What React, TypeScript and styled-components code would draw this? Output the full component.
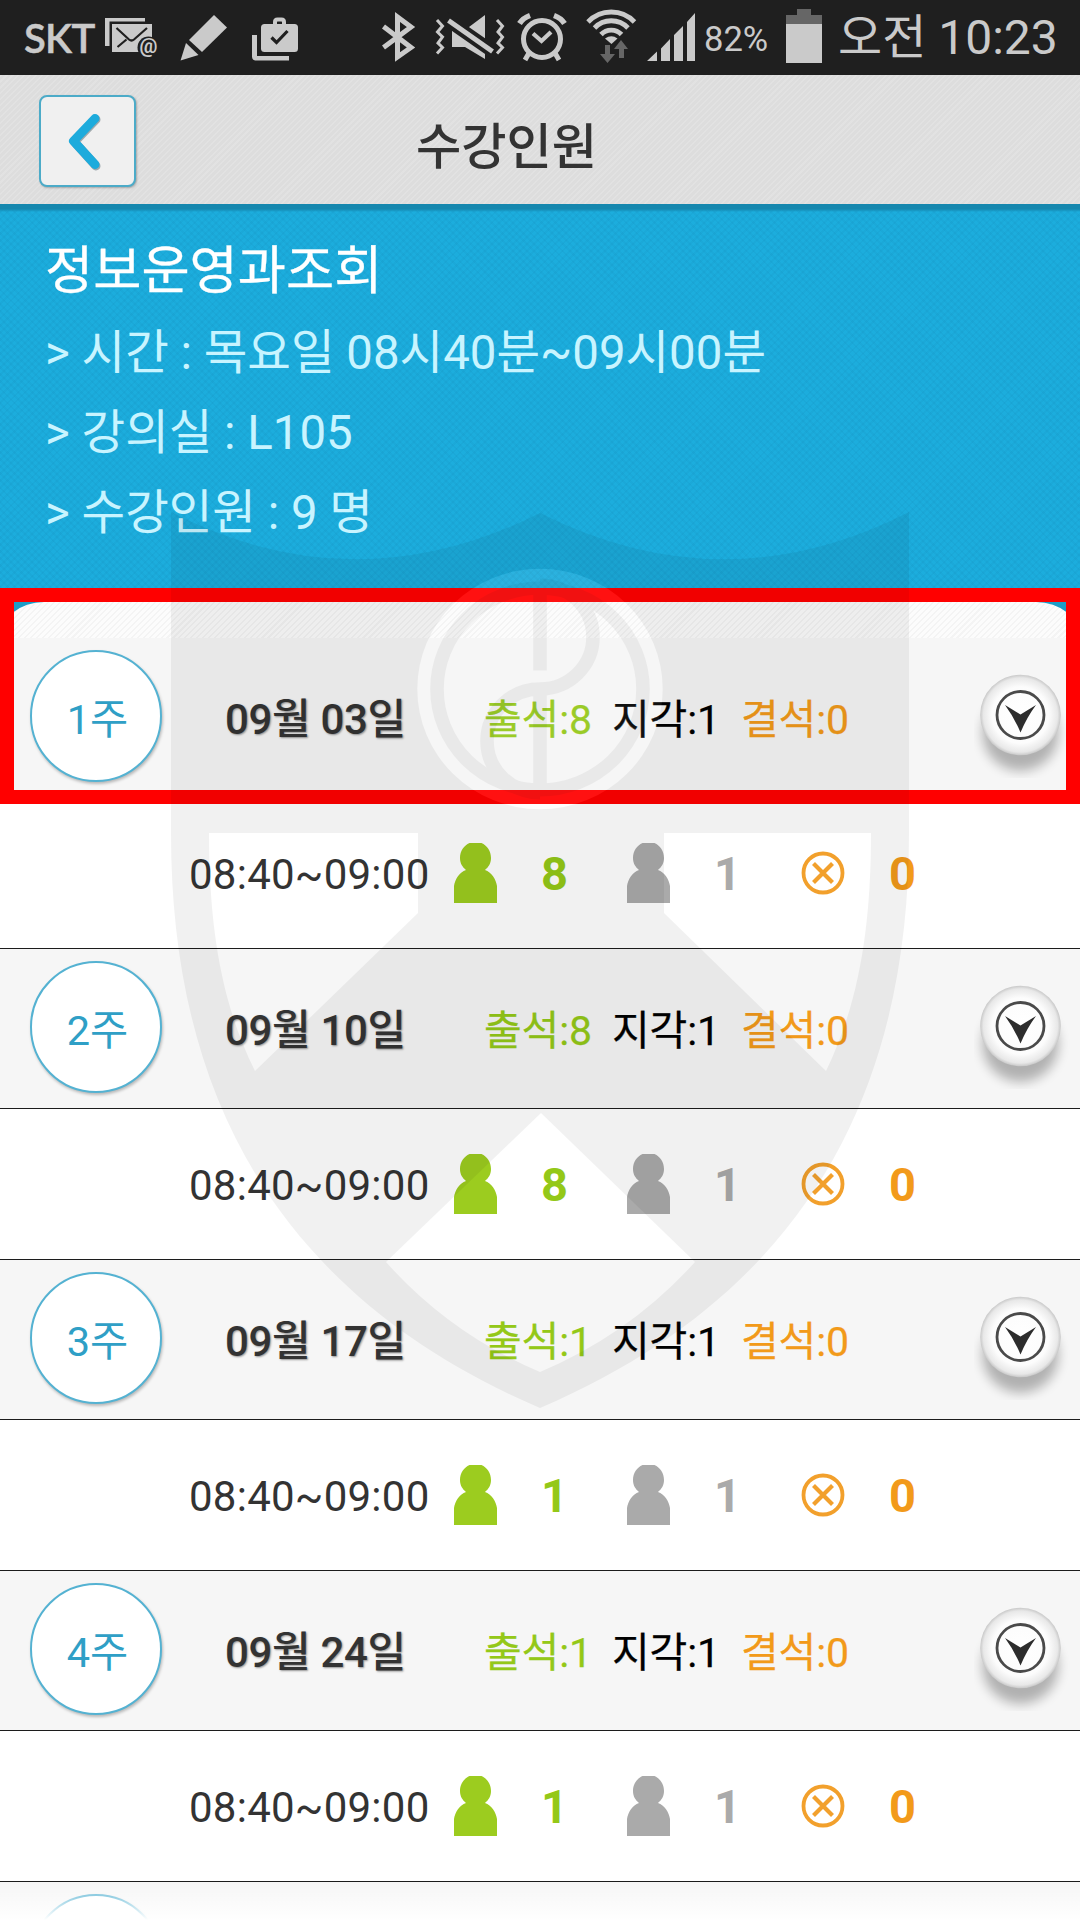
import React from "react";
import styled, { createGlobalStyle, css } from "styled-components";

const GlobalStyle = createGlobalStyle`
  * { box-sizing: border-box; }
  html, body { margin: 0; padding: 0; background: #fff; }
  body { overflow: hidden; }
`;

const font = css`
  font-family: Roboto, "Noto Sans CJK KR", sans-serif;
`;

const Screen = styled.div`
  ${font}
  position: relative;
  width: 1080px;
  height: 1920px;
  overflow: hidden;
  background: #fff;
  color: #333;
  white-space: pre;
`;

/* ---------- status bar ---------- */

const StatusBar = styled.div`
  height: 75px;
  background: #1f1f1f;
  color: #cacaca;
  display: flex;
  justify-content: space-between;
`;

const StatusGroup = styled.div`
  display: flex;
  height: 75px;
`;

const Glyph = styled.svg<{ $gap: number }>`
  display: block;
  flex: none;
  margin-left: ${(p) => p.$gap}px;
`;

const Carrier = styled.span`
  font-family: Lato, sans-serif;
  font-weight: 600;
  font-size: 40px;
  line-height: 76px;
  width: 103px;
  padding-left: 24px;
  letter-spacing: -0.7px;
  -webkit-text-stroke: 0.5px #cacaca;
`;

const Percent = styled.span`
  font-size: 34.6px;
  line-height: 78px;
  margin-left: 7px;
  width: 68px;
`;

const Clock = styled.span`
  font-size: 48px;
  line-height: 75px;
  margin-left: 16px;
  width: 242px;
`;

/* ---------- title bar ---------- */

const TitleBar = styled.header`
  height: 129px;
  display: flex;
  align-items: flex-start;
  padding: 20px 0 0 39px;
  background: repeating-linear-gradient(
      135deg,
      rgba(255, 255, 255, 0.14) 0 1.5px,
      transparent 1.5px 4.2px
    ),
    #dddddd;
`;

const BackButton = styled.button`
  width: 97px;
  height: 92px;
  padding: 0;
  border: 2px solid #4cabc8;
  border-radius: 8px;
  background: #f0f0f0;
  box-shadow: 1px 1px 2px rgba(0, 0, 0, 0.25);
  svg { display: block; }
`;

const Title = styled.h1`
  margin: 0 0 0 280px;
  font-size: 49.2px;
  font-weight: 500;
  line-height: 104px;
  color: #333;
`;

/* ---------- course summary ---------- */

const Summary = styled.section`
  height: 398px;
  padding: 30px 0 0 45px;
  background: linear-gradient(#1587ae 0 5px, rgba(21, 135, 174, 0) 8px),
    repeating-linear-gradient(45deg, rgba(0, 60, 100, 0.04) 0 2px, transparent 2px 5px),
    repeating-linear-gradient(135deg, rgba(0, 60, 100, 0.04) 0 2px, transparent 2px 5px),
    #1caddd;
`;

const CourseName = styled.h2`
  margin: 0;
  font-size: 52.4px;
  font-weight: 400;
  line-height: 74px;
  color: #fff;
  -webkit-text-stroke: 0.3px #fff;
`;

const SummaryLine = styled.p<{ $first?: boolean }>`
  margin: ${(p) => (p.$first ? "5px" : "0")} 0 0;
  font-size: 47.4px;
  line-height: 80px;
  color: #c8f4ff;
`;

/* ---------- weekly list ---------- */

const ListCap = styled.div`
  height: 36px;
  background: #1d9cc6;
`;

const ListCapInner = styled.div`
  height: 36px;
  border-radius: 44px 44px 0 0 / 36px 36px 0 0;
  background: repeating-linear-gradient(
      135deg,
      rgba(0, 0, 0, 0.03) 0 1.5px,
      transparent 1.5px 4.2px
    ),
    #fcfcfc;
`;

const WeekRow = styled.div`
  height: 160px;
  border-bottom: 1px solid #1c1c1c;
  background: #f6f6f6;
  display: grid;
  grid-template-columns: 195px 259px 128px 129px 1fr;
  padding-left: 30px;
  align-items: start;
`;

const WeekBadge = styled.div`
  width: 132px;
  height: 132px;
  margin-top: 12px;
  border: 2px solid #54b2d2;
  border-radius: 50%;
  background: #fff;
  box-shadow: 1px 2px 3px rgba(0, 0, 0, 0.25);
  color: #2f9fc6;
  font-size: 41.5px;
  line-height: 136px;
  text-align: center;
  padding-left: 3px;
`;

const DateText = styled.span`
  font-size: 42px;
  font-weight: 500;
  line-height: 164px;
  letter-spacing: -0.35px;
  text-shadow: 1px 1px 2px rgba(0, 0, 0, 0.4);
`;

const CountText = styled.span<{ $color: string }>`
  font-size: 41px;
  line-height: 164px;
  letter-spacing: -0.1px;
  color: ${(p) => p.$color};
  -webkit-text-stroke: 0.25px ${(p) => p.$color};
`;

const ExpandCell = styled.div`
  grid-column: 6;
  grid-row: 1;
  display: flex;
  justify-content: flex-end;
  padding: 28px 10px 0 0;
  svg { display: block; }
`;

const SlotRow = styled.div`
  height: 151px;
  border-bottom: 1px solid #1c1c1c;
  background: #fff;
  display: grid;
  grid-template-columns: 265px 43px 130px 43px 131px 43px 1fr;
  padding-left: 189px;
  align-items: start;
  svg { display: block; }
`;

const SlotTime = styled.span`
  font-size: 42px;
  line-height: 153px;
  letter-spacing: 0.25px;
`;

const SlotCount = styled.span<{ $color: string; $inset?: number }>`
  font-size: 47px;
  font-weight: 700;
  line-height: 152px;
  padding-left: ${(p) => p.$inset ?? 44}px;
  color: ${(p) => p.$color};
`;

const IconBox = styled.div`
  padding-top: 45px;
`;

/* ---------- overlays ---------- */

const Highlight = styled.div`
  position: absolute;
  left: 0;
  top: 588px;
  width: 1080px;
  height: 216px;
  border: 14px solid #f00;
  pointer-events: none;
`;

const BottomFade = styled.div`
  position: absolute;
  left: 0;
  right: 0;
  bottom: 0;
  height: 38px;
  background: linear-gradient(rgba(255, 255, 255, 0), #fff);
`;

const Crest = styled.svg`
  position: absolute;
  left: 0;
  top: 0;
  pointer-events: none;
`;

/* ---------- icons ---------- */

const LIGHT = "#cacaca";
const DARK = "#1f1f1f";

type IconProps = { x: number; w: number; gap: number; children: React.ReactNode };

const StatusIcon = ({ x, w, gap, children }: IconProps) => (
  <Glyph $gap={gap} width={w} height={75} viewBox={`${x} 0 ${w} 75`} fill={LIGHT}>
    {children}
  </Glyph>
);

const MailIcon = () => (
  <StatusIcon x={103} w={57} gap={0}>
    <path d="M105 18H145V21.5H109.5V46H105Z" />
    <rect x="112" y="24" width="40" height="28" />
    <path d="M116.500 28L129 39.500Q131.500 41.500 134 39.500L147 28M117.500 47L126.500 39.500" fill="none" stroke={DARK} strokeWidth="2.200" />
    <circle cx="148.500" cy="47.500" r="11" fill={DARK} />
    <text x="148.500" y="53" fontSize="20" fontWeight="700" textAnchor="middle" fontFamily="Roboto, sans-serif">@</text>
  </StatusIcon>
);

const PencilIcon = () => (
  <StatusIcon x={178} w={52} gap={18}>
    <path d="M214 15L227 27.500L202 52L189 40Z" />
    <path d="M186 43L198.500 55L180.500 60.500Z" />
  </StatusIcon>
);

const BriefcaseIcon = () => (
  <StatusIcon x={250} w={50} gap={20}>
    <path d="M252 35H257V56H289V60.500H256Q252 60.500 252 56.500Z" />
    <rect x="261" y="24" width="37" height="28" rx="3.500" />
    <path d="M275 25V22Q275 19.500 277.500 19.500H281.500Q284 19.500 284 22V25" fill="none" stroke={LIGHT} strokeWidth="4" />
    <path d="M271.500 37.500L276.500 42.500L287.500 31" fill="none" stroke={DARK} strokeWidth="3.200" />
  </StatusIcon>
);

const BluetoothIcon = () => (
  <StatusIcon x={380} w={37} gap={0}>
    <path d="M383.500 26.500L411 47.500L397.500 57V17L411 27L383.500 47.500" fill="none" stroke={LIGHT} strokeWidth="5" />
  </StatusIcon>
);

const MuteIcon = () => (
  <StatusIcon x={434} w={72} gap={17}>
    <path d="M452 30H465L485 15V59L465 47H452Z" />
    <path d="M444 17.500L497 54.500" stroke={DARK} strokeWidth="13" />
    <path d="M448.500 20.500L492.500 51.500" stroke={LIGHT} strokeWidth="5" />
    <path d="M437 20L442.500 26L437.500 32L442.500 37L438 43L442.500 47.500L437 53.500" fill="none" stroke={LIGHT} strokeWidth="3" />
    <path d="M497 20L502.500 26L498 32L502.500 37L498 43L502.500 47.500L497 53.500" fill="none" stroke={LIGHT} strokeWidth="3" />
  </StatusIcon>
);

const AlarmIcon = () => (
  <StatusIcon x={516} w={52} gap={10}>
    <g fill="none" stroke={LIGHT}>
      <circle cx="542" cy="39" r="18.500" strokeWidth="5" />
      <path d="M533 33.500L541.500 41L551 32" strokeWidth="4.200" />
      <path d="M519.500 23.500Q523 18 530 15.500M564.500 23.500Q561 18 554 15.500" strokeWidth="5.500" />
      <path d="M529 53L525 60M555 53L559 60" strokeWidth="5" />
    </g>
  </StatusIcon>
);

const WifiIcon = () => (
  <StatusIcon x={585} w={53} gap={17}>
    <g fill="none" stroke={LIGHT} strokeWidth="4.800">
      <path d="M588 22A32 32 0 0 1 634.500 22" />
      <path d="M594.500 28A23 23 0 0 1 628 28" />
      <path d="M601 34.500A14 14 0 0 1 621.500 34.500" />
    </g>
    <path d="M605 38.500Q611.500 34 617.500 38.500L611.500 44Z" />
    <path fill="#666" d="M605 45H610V54H615L607.500 63L600 54H605ZM621 40L628 49H624V58H619V49H614Z" />
  </StatusIcon>
);

const SignalIcon = () => (
  <StatusIcon x={646} w={51} gap={8}>
    <path d="M647 61L657 51.500V61ZM661 61V48.500L670 39V61ZM674 61V35L683 26V61ZM687 61V22L695 13V61Z" />
  </StatusIcon>
);

const BatteryIcon = () => (
  <StatusIcon x={765} w={36} gap={14}>
    <path fill="#666" d="M776 9H790V15H801V24H765V15H776Z" />
    <rect x="765" y="24" width="36" height="39" />
  </StatusIcon>
);

const PersonIcon = ({ color }: { color: string }) => (
  <svg width="43" height="60" viewBox="0 0 43 60">
    <path
      fill={color}
      d="M15.500 0H27.500C33 2.500 37 8 37 15C37 20.500 34.500 24 31 27C37.500 29.500 42 36 43 43V60H0V43C1 36 5.500 29.500 12 27C8.500 24 6 20.500 6 15C6 8 10 2.500 15.500 0Z"
    />
  </svg>
);

const AbsentIcon = () => (
  <svg width="44" height="60" viewBox="0 0 44 60">
    <g fill="none" stroke="#f2a02c">
      <circle cx="22" cy="30" r="19.500" strokeWidth="3.800" />
      <path d="M12.500 20.500L31.500 39.500M31.500 20.500L12.500 39.500" strokeWidth="4.200" />
    </g>
  </svg>
);

const ExpandIcon = () => (
  <svg width="96" height="112" viewBox="0 0 96 112">
    <defs>
      <radialGradient id="knob">
        <stop offset="0" stopColor="#fff" />
        <stop offset="0.700" stopColor="#fcfcfc" />
        <stop offset="0.920" stopColor="#e8e8e8" />
        <stop offset="1" stopColor="#c8c8c8" />
      </radialGradient>
      <filter id="soft" x="-40%" y="-40%" width="180%" height="180%">
        <feGaussianBlur stdDeviation="6" />
      </filter>
    </defs>
    <circle cx="46.500" cy="67" r="38" fill="#000" opacity="0.280" filter="url(#soft)" />
    <circle cx="46.500" cy="49" r="40.300" fill="url(#knob)" />
    <circle cx="46.500" cy="49" r="23.500" fill="none" stroke="#4a4a4a" strokeWidth="2.800" />
    <path d="M31 39L46.500 48.500L62 39Q53 51 46.500 66.500Q40 51 31 39Z" fill="#2d2d2d" />
  </svg>
);

const ChevronIcon = () => (
  <svg width="93" height="88" viewBox="41 97 93 88" fill="none" strokeWidth="9" strokeLinecap="round" strokeLinejoin="round">
    <path d="M96 119.500L74.500 142L96 166" stroke="#9fa9ad" />
    <path d="M95 118.500L73.500 141L95 164.500" stroke="#1dabdc" />
  </svg>
);

const CrestMark = () => (
  <Crest width="1080" height="1920" viewBox="0 0 1080 1920">
    <mask id="crest" maskUnits="userSpaceOnUse" x="0" y="0" width="1080" height="1920">
      <path
        fill="#fff"
        d="M171 512Q355 606 540 513Q725 606 909 512V833C909 1080 815 1290 540 1408C265 1290 171 1080 171 833Z"
      />
      <path fill="#000" d="M209 833H418V913L255 1071C222 1005 209 930 209 833Z" />
      <path fill="#000" d="M871 833H664V913L826 1071C858 1005 871 930 871 833Z" />
      <path fill="#000" d="M541 1113L695 1262Q630 1334 540 1372Q450 1334 386 1262Z" />
      <g transform="translate(540 689) scale(1 0.980)">
        <circle r="122.700" fill="#000" />
        <g fill="none" stroke="#fff" strokeWidth="13.600">
          <circle r="103" />
          <path d="M0 -97V-19M0 0V97" />
          <path d="M0 -106A53 53 0 0 1 0 0A53 53 0 0 0 0 106" />
        </g>
      </g>
    </mask>
    <rect width="1080" height="1920" fill="#000" fillOpacity="0.053" mask="url(#crest)" />
    <ellipse cx="540" cy="689" rx="122.700" ry="120.200" fill="#fff" fillOpacity="0.066" />
  </Crest>
);

/* ---------- data ---------- */

const GREEN = "#94c818";
const ORANGE = "#f29a1a";

const weeks = [
  { week: 1, date: "09월 03일", present: 8, late: 1, absent: 0 },
  { week: 2, date: "09월 10일", present: 8, late: 1, absent: 0 },
  { week: 3, date: "09월 17일", present: 1, late: 1, absent: 0 },
  { week: 4, date: "09월 24일", present: 1, late: 1, absent: 0 },
];

export default function App() {
  return (
    <Screen>
      <GlobalStyle />
      <StatusBar>
        <StatusGroup>
          <Carrier>SKT</Carrier>
          <MailIcon />
          <PencilIcon />
          <BriefcaseIcon />
        </StatusGroup>
        <StatusGroup>
          <BluetoothIcon />
          <MuteIcon />
          <AlarmIcon />
          <WifiIcon />
          <SignalIcon />
          <Percent>82%</Percent>
          <BatteryIcon />
          <Clock>오전 10:23</Clock>
        </StatusGroup>
      </StatusBar>
      <TitleBar>
        <BackButton aria-label="뒤로">
          <ChevronIcon />
        </BackButton>
        <Title>수강인원</Title>
      </TitleBar>
      <Summary>
        <CourseName>정보운영과조회</CourseName>
        <SummaryLine $first>{"> 시간 : 목요일 08시40분~09시00분"}</SummaryLine>
        <SummaryLine>{"> 강의실 : L105"}</SummaryLine>
        <SummaryLine>{"> 수강인원 : 9 명"}</SummaryLine>
      </Summary>
      <ListCap>
        <ListCapInner />
      </ListCap>
      {weeks.map((w) => (
        <React.Fragment key={w.week}>
          <WeekRow>
            <WeekBadge>{w.week}주</WeekBadge>
            <DateText>{w.date}</DateText>
            <CountText $color={GREEN}>출석:{w.present}</CountText>
            <CountText $color="#000">지각:{w.late}</CountText>
            <CountText $color={ORANGE}>결석:{w.absent}</CountText>
            <ExpandCell>
              <ExpandIcon />
            </ExpandCell>
          </WeekRow>
          <SlotRow>
            <SlotTime>08:40~09:00</SlotTime>
            <IconBox><PersonIcon color="#9ccc1f" /></IconBox>
            <SlotCount $color={GREEN}>{w.present}</SlotCount>
            <IconBox><PersonIcon color="#aaa" /></IconBox>
            <SlotCount $color="#aaa">{w.late}</SlotCount>
            <IconBox><AbsentIcon /></IconBox>
            <SlotCount $color={ORANGE} $inset={45}>{w.absent}</SlotCount>
          </SlotRow>
        </React.Fragment>
      ))}
      <WeekRow>
        <WeekBadge />
      </WeekRow>
      <BottomFade />
      <Highlight />
      <CrestMark />
    </Screen>
  );
}
